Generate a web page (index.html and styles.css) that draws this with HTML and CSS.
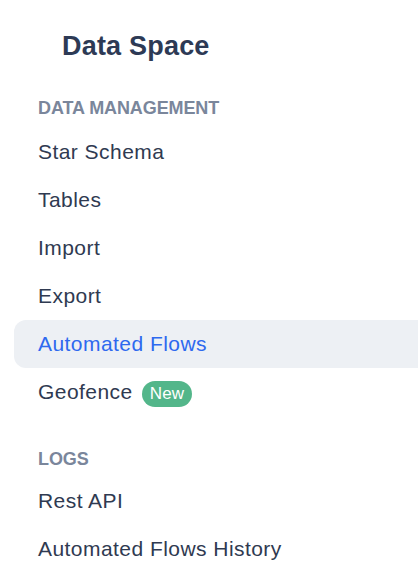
FILE: index.html
```html
<!DOCTYPE html>
<html>
<head>
<meta charset="utf-8">
<link rel="stylesheet" href="styles.css">
</head>
<body>
<aside class="sidebar">
  <h1 class="title">Data Space</h1>
  <section class="group">
    <h2 class="group-label">DATA MANAGEMENT</h2>
    <ul class="nav">
      <li class="nav-item">Star Schema</li>
      <li class="nav-item">Tables</li>
      <li class="nav-item">Import</li>
      <li class="nav-item">Export</li>
      <li class="nav-item active">Automated Flows</li>
      <li class="nav-item">Geofence <span class="badge">New</span></li>
    </ul>
  </section>
  <section class="group logs">
    <h2 class="group-label">LOGS</h2>
    <ul class="nav">
      <li class="nav-item">Rest API</li>
      <li class="nav-item">Automated Flows History</li>
    </ul>
  </section>
</aside>
</body>
</html>
```
FILE: styles.css
```css
html, body {
  margin: 0;
  padding: 0;
  background: #ffffff;
}
body {
  font-family: "Liberation Sans", Arial, sans-serif;
  overflow: hidden;
}
.sidebar {
  width: 418px;
  height: 580px;
  overflow: hidden;
  padding-top: 30px;
  box-sizing: border-box;
}
.title {
  margin: 0 0 34px 62px;
  font-size: 27px;
  line-height: 32px;
  font-weight: 700;
  color: #2d3a55;
  letter-spacing: 0.2px;
}
.group-label {
  margin: 0 0 8px 38px;
  font-size: 18px;
  line-height: 24px;
  font-weight: 700;
  color: #7a869b;
  letter-spacing: -0.1px;
}
.logs {
  margin-top: 31px;
}
.logs .group-label {
  margin-bottom: 6px;
}
.nav {
  list-style: none;
  margin: 0 -30px 0 14px;
  padding: 0;
}
.nav-item {
  display: flex;
  align-items: center;
  height: 48px;
  padding-left: 24px;
  font-size: 21px;
  letter-spacing: 0.45px;
  color: #2f3a51;
  border-radius: 12px;
}
.nav-item.active {
  background: #edf0f4;
  color: #2e69ef;
}
.badge {
  display: inline-flex;
  align-items: center;
  height: 26px;
  margin-left: 9px;
  margin-top: 3px;
  padding: 0 8px;
  border-radius: 13px;
  background: #53b68a;
  color: #ffffff;
  font-size: 17px;
  letter-spacing: 0.2px;
}
```
